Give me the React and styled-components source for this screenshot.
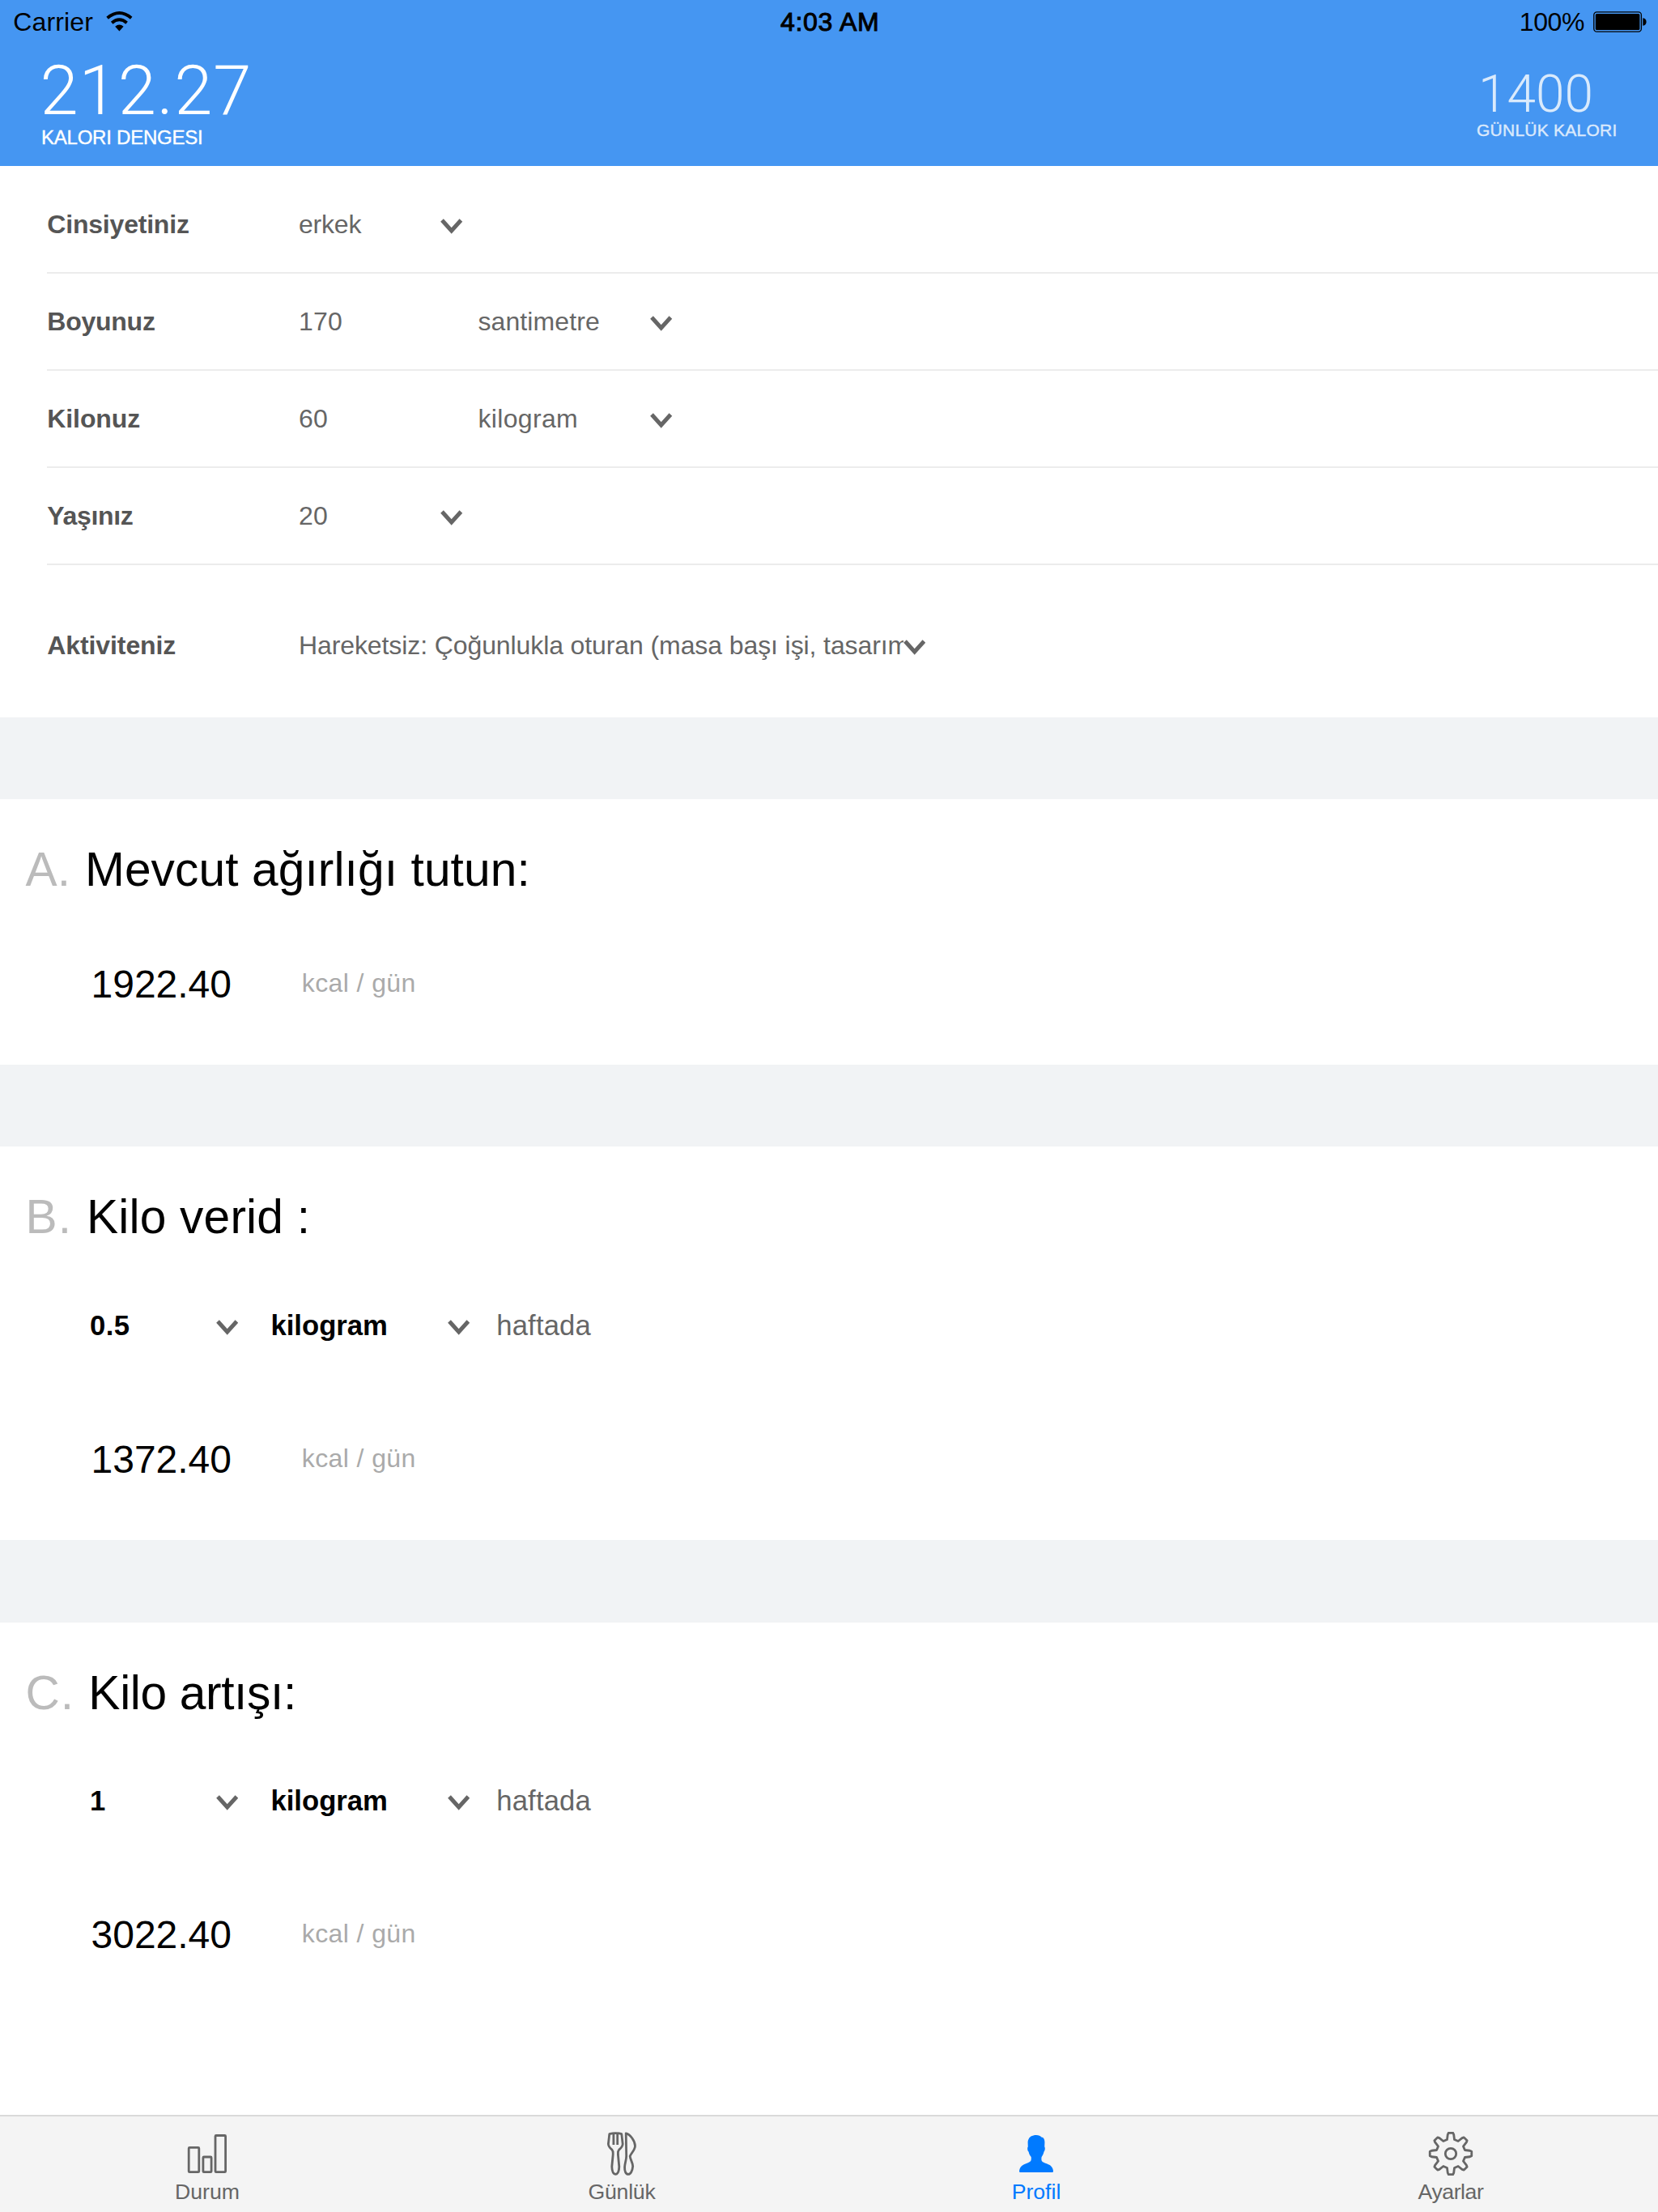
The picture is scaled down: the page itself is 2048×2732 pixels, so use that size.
import React from "react";
import styled, { createGlobalStyle } from "styled-components";

const GlobalStyle = createGlobalStyle`
  *, *::before, *::after { box-sizing: border-box; }
  body {
    margin: 0;
    background: #fff;
    color: #000;
    font-family: "Liberation Sans", Arial, Helvetica, sans-serif;
  }
`;

const track = ({ $track = 0 }) => `letter-spacing: ${$track}px;`;

const Screen = styled.div`
  display: flex;
  flex-direction: column;
  width: 2048px;
  height: 2732px;
  overflow: hidden;
  background: #fff;
`;

/* ---------- header ---------- */

const Header = styled.header`
  flex: none;
  height: 205.33px;
  background: #4596f2;
`;

const StatusBar = styled.div`
  display: grid;
  grid-template-columns: 1fr auto 1fr;
  align-items: center;
  height: 54.67px;
  padding: 0 14px 0 16.3px;
  font-size: 32px;
  line-height: 54.67px;
`;

const StatusGroup = styled.div`
  display: flex;
  align-items: center;
  justify-content: ${(p) => (p.$end ? "flex-end" : "flex-start")};
  gap: ${(p) => (p.$end ? "11px" : "15.8px")};
`;

const StatusText = styled.span`
  ${track}
`;

const Clock = styled.span`
  letter-spacing: 0.7px;
  -webkit-text-stroke: 1px #000;
`;

const WifiSvg = styled.svg`
  display: block;
  margin-bottom: 2px;
`;

const Totals = styled.div`
  display: flex;
  justify-content: space-between;
  padding: 0 50.4px 0 49.4px;
`;

const Total = styled.div`
  padding-top: ${(p) => (p.$small ? "30.3px" : "15.3px")};
  color: #fff;
  opacity: ${(p) => (p.$small ? 0.8 : 1)};
`;

const TotalNumber = styled.div`
  font-family: Roboto, "Liberation Sans", sans-serif;
  font-weight: 300;
  font-size: ${(p) => (p.$small ? "64px" : "85px")};
  line-height: ${(p) => (p.$small ? "64.3px" : "85px")};
  margin-left: ${(p) => (p.$small ? "2px" : 0)};
  ${track}
`;

const TotalCaption = styled.div`
  font-size: ${(p) => (p.$small ? "21px" : "24px")};
  line-height: ${(p) => (p.$small ? "21px" : "24px")};
  margin: ${(p) => (p.$small ? "0.9px 0 0" : "3.2px 0 0 1.6px")};
  -webkit-text-stroke: 0.4px #fff;
  ${track}
`;

/* ---------- profile form ---------- */

const Content = styled.main`
  flex: 1;
  display: flex;
  flex-direction: column;
  gap: 101.33px;
  min-height: 0;
  background: #f1f3f5;
`;

const Form = styled.section`
  flex: none;
  height: 680.33px;
  padding: 12.67px 0 0 58.3px;
  background: #fff;
`;

const Row = styled.div`
  display: flex;
  align-items: center;
  height: ${(p) => (p.$last ? "188px" : "120px")};
  padding-top: ${(p) => (p.$last ? "11px" : 0)};
  border-bottom: ${(p) => (p.$last ? "none" : "2px solid #ececec")};
  font-size: 32px;
  line-height: 40px;
`;

const Label = styled.span`
  flex: none;
  width: 310.7px;
  color: #555;
  font-weight: bold;
  ${track}
`;

const Field = styled.div`
  flex: none;
  width: ${(p) => p.$width}px;
  color: #666;
  ${track}
`;

const Picker = styled.div`
  flex: none;
  display: flex;
  align-items: center;
  color: ${(p) => (p.$strong ? "#000" : "#666")};
  font-weight: ${(p) => (p.$strong ? "bold" : "normal")};
`;

const PickerText = styled.span`
  width: ${(p) => p.$width}px;
  overflow: hidden;
  white-space: nowrap;
  ${track}
`;

const ChevronSvg = styled.svg`
  display: block;
  margin-top: 5px;
`;

/* ---------- calorie plans ---------- */

const Plan = styled.section`
  flex: ${(p) => (p.$height ? "none" : "1")};
  height: ${(p) => (p.$height ? `${p.$height}px` : "auto")};
  padding: 54px 0 0 31.4px;
  background: #fff;
`;

const PlanTitle = styled.h2`
  display: flex;
  gap: 17.5px;
  margin: 0;
  font-weight: normal;
  font-size: 58.67px;
  line-height: 66px;
  ${track}
`;

const PlanLetter = styled.span`
  color: #bbb;
  ${track}
`;

const Rate = styled.div`
  display: flex;
  align-items: center;
  margin: 80.5px 0 0 79.6px;
  font-size: 34.67px;
  line-height: 40px;
`;

const RatePeriod = styled.span`
  margin-left: 6px;
  color: #666;
  letter-spacing: 0.15px;
`;

const RateGap = styled.span`
  width: ${(p) => p.$width}px;
`;

const Result = styled.div`
  display: flex;
  align-items: flex-start;
  margin: ${(p) => (p.$afterRate ? "119.2px" : "81.7px")} 0 0 81.1px;
`;

const ResultValue = styled.span`
  width: 260.3px;
  font-size: 48px;
  line-height: 54px;
`;

const ResultUnit = styled.span`
  color: #aaa;
  font-size: 32px;
  line-height: 50.2px;
  letter-spacing: 0.4px;
`;

/* ---------- tab bar ---------- */

const TabBar = styled.nav`
  flex: none;
  display: grid;
  grid-template-columns: repeat(4, 1fr);
  height: 120px;
  border-top: 2px solid #dadada;
  background: #f4f4f4;
`;

const Tab = styled.a`
  display: flex;
  flex-direction: column;
  align-items: center;
  padding-top: 19px;
  color: ${(p) => (p.$active ? "#007aff" : "#666")};
  font-size: 26.67px;
  line-height: 30px;
`;

const TabLabel = styled.span`
  margin-top: 4.8px;
  ${track}
`;

const TabIcon = styled.svg.attrs({ width: 60, height: 54, viewBox: "0 0 60 54" })`
  display: block;
  fill: none;
  stroke: currentColor;
  stroke-width: 2.8;
  stroke-linejoin: round;
`;

/* ---------- drawings ---------- */

const Wifi = () => (
  <WifiSvg width="33" height="25" viewBox="0 0 33 25">
    <path d="M1.6 8.2 Q16.4 -4 31.2 8.2" fill="none" stroke="#000" strokeWidth="3.9" />
    <path d="M7.2 14.2 Q16.4 6.4 25.6 14.2" fill="none" stroke="#000" strokeWidth="3.9" />
    <path d="M11.2 18.7 Q16.4 14.5 21.6 18.7 L16.4 24.4 Z" />
  </WifiSvg>
);

const Battery = () => (
  <svg width="66" height="26" viewBox="0 0 66 26">
    <rect x="0.8" y="0.8" width="58.6" height="24.4" rx="3.6" fill="none" stroke="#000" strokeWidth="1.3" />
    <rect x="2.8" y="2.9" width="54.6" height="20.2" rx="1.6" />
    <path d="M61.3 8.3 Q65.6 9 65.6 13 Q65.6 17 61.3 17.7 Z" />
  </svg>
);

const Chevron = () => (
  <ChevronSvg width="27.4" height="19" viewBox="0 0 27.4 19">
    <path d="M2 2 L13.7 15 L25.4 2" fill="none" stroke="#666" strokeWidth="5" />
  </ChevronSvg>
);

const BarsIcon = () => (
  <TabIcon>
    <rect x="7.2" y="19.4" width="12.6" height="30.3" rx="1" />
    <rect x="24.9" y="31" width="10.2" height="18.7" rx="1" />
    <rect x="40" y="4.5" width="12.6" height="45.2" rx="1" />
  </TabIcon>
);

const CutleryIcon = () => (
  <TabIcon>
    <path d="M14.8 2.6 Q22.3 0.6 29.8 2.6 L31.2 15 Q31 18.6 26.6 22.2 Q25.2 23.6 25.4 28 L26.8 43 Q26.6 51.8 22.3 52.4 Q18 51.8 17.8 43 L19.2 28 Q19.4 23.6 18 22.2 Q13.6 18.6 13.4 15 Z" />
    <path d="M19.9 2.5 V16 M24.7 2.5 V16" />
    <path d="M35.2 1.8 C40.5 2.8 46.4 11.5 46.5 17.5 C46.2 23 41 27 40.2 30.2 C40.4 34 43.8 38.5 43.7 42.5 C43.2 48.5 40.8 52.4 38 52.4 C34.9 52.4 33.4 48.5 33.6 43.5 C33.9 38 35.6 35 35.7 30 Z" />
  </TabIcon>
);

const PersonIcon = () => (
  <TabIcon>
    <path
      fill="currentColor"
      stroke="none"
      d="M30 4.1 C33 4.1 35.3 5 36.3 6.6 C39 6.8 40.6 9.5 40.4 13.5 L40.2 18.4 C41.2 19.2 40.9 23.6 39.5 24.4 C39 27 38 29 36.6 31 C36.3 32.8 36.2 35 37 36.2 C39.5 38.8 44.5 39.2 47.4 41.6 C49.9 43.8 51 46.6 51 48.8 Q51 50 49.8 50 H10.2 Q9 50 9 48.8 C9.2 46 10.2 43.6 12.8 41.6 C15.6 39.4 20.4 38.8 23 36.2 C23.9 35 23.9 32.8 23.7 31 C22 29 21 27 20.6 24.4 C19 23.6 18.8 19.2 19.8 18.4 L19.6 13.5 C19.4 7.5 23.8 4.1 30 4.1 Z"
    />
  </TabIcon>
);

const polar = (radius, degrees) => {
  const a = (degrees * Math.PI) / 180;
  return `${(30 + radius * Math.sin(a)).toFixed(2)} ${(27 - radius * Math.cos(a)).toFixed(2)}`;
};

const gearPath = `M${Array.from({ length: 8 }, (_, i) => {
  const c = i * 45;
  return [
    polar(18, c - 14.5),
    polar(23.9, c - 9),
    polar(25.9, c - 6),
    polar(25.9, c + 6),
    polar(23.9, c + 9),
    polar(18, c + 14.5),
  ].join(" L");
}).join(" L")} Z`;

const GearIcon = () => (
  <TabIcon>
    <path d={gearPath} />
    <circle cx="30" cy="27" r="6.7" />
  </TabIcon>
);

/* ---------- composition ---------- */

const Select = ({ children, width, strong, spacing }) => (
  <Picker $strong={strong}>
    <PickerText $width={width} $track={spacing}>{children}</PickerText>
    <Chevron />
  </Picker>
);

const Kcal = ({ value, afterRate }) => (
  <Result $afterRate={afterRate}>
    <ResultValue>{value}</ResultValue>
    <ResultUnit>kcal / gün</ResultUnit>
  </Result>
);

const WeeklyRate = ({ amount }) => (
  <Rate>
    <Select width={155.6} strong spacing={0.4}>{amount}</Select>
    <RateGap $width={40.5} />
    <Select width={218.6} strong>kilogram</Select>
    <RateGap $width={26.8} />
    <RatePeriod>haftada</RatePeriod>
  </Rate>
);

const Title = ({ letter, letterSpacing, spacing, children }) => (
  <PlanTitle $track={spacing}>
    <PlanLetter $track={letterSpacing}>{letter}</PlanLetter>
    {children}
  </PlanTitle>
);

export default function App() {
  return (
    <>
      <GlobalStyle />
      <Screen lang="tr">
        <Header>
          <StatusBar>
            <StatusGroup>
              <StatusText $track={0.15}>Carrier</StatusText>
              <Wifi />
            </StatusGroup>
            <Clock>4:03 AM</Clock>
            <StatusGroup $end>
              <StatusText $track={-0.4}>100%</StatusText>
              <Battery />
            </StatusGroup>
          </StatusBar>
          <Totals>
            <Total>
              <TotalNumber $track={1}>212.27</TotalNumber>
              <TotalCaption $track={-0.23}>KALORI DENGESI</TotalCaption>
            </Total>
            <Total $small>
              <TotalNumber $small>1400</TotalNumber>
              <TotalCaption $small $track={0.25}>GÜNLÜK KALORI</TotalCaption>
            </Total>
          </Totals>
        </Header>

        <Content>
          <Form>
            <Row>
              <Label $track={-0.2}>Cinsiyetiniz</Label>
              <Select width={175.5} spacing={-0.2}>erkek</Select>
            </Row>
            <Row>
              <Label $track={-0.25}>Boyunuz</Label>
              <Field $width={221.4} $track={0.2}>170</Field>
              <Select width={213.1} spacing={0.12}>santimetre</Select>
            </Row>
            <Row>
              <Label $track={-0.1}>Kilonuz</Label>
              <Field $width={221.4} $track={0.3}>60</Field>
              <Select width={213.1} spacing={0.35}>kilogram</Select>
            </Row>
            <Row>
              <Label $track={-0.35}>Yaşınız</Label>
              <Select width={175.5} spacing={0.3}>20</Select>
            </Row>
            <Row $last>
              <Label $track={-0.1}>Aktiviteniz</Label>
              <Select width={747} spacing={-0.1}>
                Hareketsiz: Çoğunlukla oturan (masa başı işi, tasarım
              </Select>
            </Row>
          </Form>

          <Plan $height={328}>
            <Title letter="A." letterSpacing={0.3} spacing={0.1}>Mevcut ağırlığı tutun:</Title>
            <Kcal value="1922.40" />
          </Plan>

          <Plan $height={486}>
            <Title letter="B." letterSpacing={1.3} spacing={0.2}>Kilo verid :</Title>
            <WeeklyRate amount="0.5" />
            <Kcal value="1372.40" afterRate />
          </Plan>

          <Plan>
            <Title letter="C." letterSpacing={0.9} spacing={-0.35}>Kilo artışı:</Title>
            <WeeklyRate amount="1" />
            <Kcal value="3022.40" afterRate />
          </Plan>
        </Content>

        <TabBar>
          <Tab>
            <BarsIcon />
            <TabLabel>Durum</TabLabel>
          </Tab>
          <Tab>
            <CutleryIcon />
            <TabLabel $track={-0.23}>Günlük</TabLabel>
          </Tab>
          <Tab $active>
            <PersonIcon />
            <TabLabel>Profil</TabLabel>
          </Tab>
          <Tab>
            <GearIcon />
            <TabLabel $track={-0.45}>Ayarlar</TabLabel>
          </Tab>
        </TabBar>
      </Screen>
    </>
  );
}
